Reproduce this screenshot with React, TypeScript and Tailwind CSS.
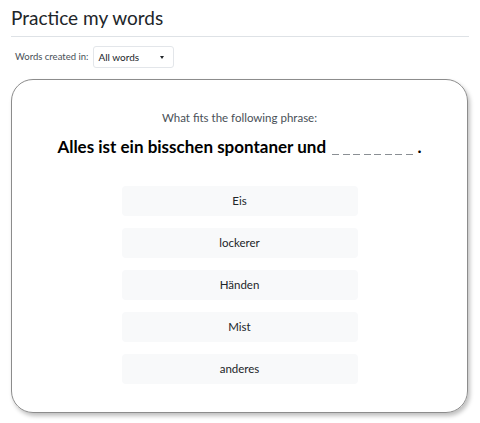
const OPTIONS = ['Eis', 'lockerer', 'Händen', 'Mist', 'anderes'];

export default function App() {
  return (
    <div
      className="min-h-screen bg-white px-[11px] pt-[4px] text-[#212529]"
      style={{ fontFamily: 'Lato, "Noto Sans", sans-serif' }}
    >
      <h1 className="text-[19px] leading-[28px] font-normal">Practice my words</h1>
      <hr className="mt-[4px] border-t border-[#dee2e6]" />

      <div className="flex items-center gap-[5px] pl-[4px] mt-[9px]">
        <span className="text-[9.5px] text-[#495057]">Words created in:</span>
        <div className="flex items-center justify-between w-[81px] h-[22px] border border-[#e3e6ea] rounded-[3px] pl-[4px] pr-[9px] text-[10px]">
          <span>All words</span>
          <span className="w-0 h-0 border-l-[2.5px] border-r-[2.5px] border-t-[3px] border-l-transparent border-r-transparent border-t-[#212529]" />
        </div>
      </div>

      <div className="mt-[11px] w-[457px] h-[334px] border border-[#8c8c8c] rounded-[22px] shadow-[2px_3px_4px_rgba(0,0,0,0.25)] flex flex-col items-center">
        <p className="mt-[29px] text-[11.5px] text-[#495057]">What fits the following phrase:</p>
        <p className="mt-[8px] text-[17px] font-bold text-black whitespace-nowrap flex items-baseline">
          <span>Alles ist ein bisschen spontaner und</span>
          <span className="inline-flex gap-[3.5px] ml-[6px] mr-[5px] translate-y-[2px]">
            {Array.from({ length: 8 }).map((_, i) => (
              <span key={i} className="block w-[7px] h-[1px] bg-[#8a8f94]" />
            ))}
          </span>
          <span>.</span>
        </p>
        <div className="mt-[26px] flex flex-col gap-[12px]">
          {OPTIONS.map((o) => (
            <button
              key={o}
              className="w-[236px] h-[30px] rounded-[4px] bg-[#f8f9fa] text-[11.5px] text-[#212529]"
            >
              {o}
            </button>
          ))}
        </div>
      </div>
    </div>
  );
}
